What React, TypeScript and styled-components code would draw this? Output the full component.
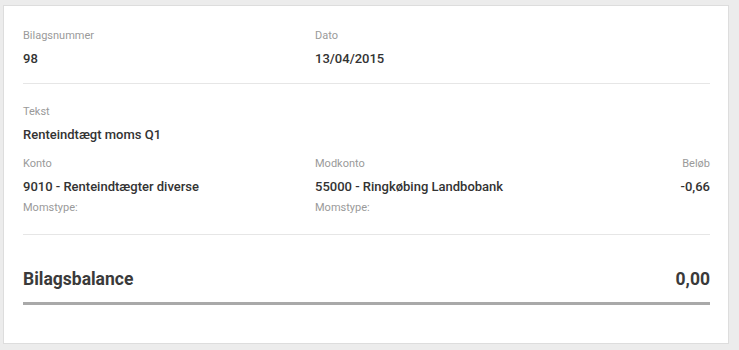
import React from "react";
import styled, { createGlobalStyle } from "styled-components";

const GlobalStyle = createGlobalStyle`
  html, body {
    margin: 0;
    padding: 0;
    background: #ececec;
    font-family: Roboto, "Liberation Sans", Arial, sans-serif;
  }
`;

const Page = styled.div`
  padding: 5px 10px 6px 3px;
`;

const Card = styled.div`
  background: #ffffff;
  border: 1px solid #dddddd;
  padding: 23px 18px 0 19px;
  box-sizing: border-box;
  height: 339px;
`;

const Row = styled.div<{ $gapBelow?: number }>`
  display: grid;
  grid-template-columns: 292px 1fr auto;
  margin-bottom: ${(p) => p.$gapBelow ?? 0}px;
`;

const Field = styled.div<{ $right?: boolean }>`
  display: flex;
  flex-direction: column;
  align-items: ${(p) => (p.$right ? "flex-end" : "flex-start")};
`;

const Label = styled.div`
  font-size: 11px;
  line-height: 14px;
  color: #9a9a9a;
`;

const Value = styled.div`
  margin-top: 7px;
  font-size: 13px;
  line-height: 18px;
  font-weight: 500;
  color: #333333;
`;

const SubLabel = styled(Label)`
  margin-top: 5px;
`;

const Divider = styled.hr<{ $above: number; $below: number }>`
  border: 0;
  border-top: 1px solid #e6e6e6;
  margin: ${(p) => p.$above}px 0 ${(p) => p.$below}px;
`;

const Balance = styled.div`
  display: flex;
  justify-content: space-between;
  align-items: center;
  font-size: 17.5px;
  line-height: 24px;
  font-weight: 700;
  color: #3a3a3a;
  padding-bottom: 11px;
  border-bottom: 3px solid #a9a9a9;
`;

const App: React.FC = () => {
  return (
    <Page>
      <GlobalStyle />
      <Card>
        <Row>
          <Field>
            <Label>Bilagsnummer</Label>
            <Value>98</Value>
          </Field>
          <Field>
            <Label>Dato</Label>
            <Value>13/04/2015</Value>
          </Field>
        </Row>
        <Divider $above={15} $below={21} />
        <Row $gapBelow={13}>
          <Field>
            <Label>Tekst</Label>
            <Value>Renteindtægt moms Q1</Value>
          </Field>
        </Row>
        <Row>
          <Field>
            <Label>Konto</Label>
            <Value>9010 - Renteindtægter diverse</Value>
            <SubLabel>Momstype:</SubLabel>
          </Field>
          <Field>
            <Label>Modkonto</Label>
            <Value>55000 - Ringkøbing Landbobank</Value>
            <SubLabel>Momstype:</SubLabel>
          </Field>
          <Field $right>
            <Label>Beløb</Label>
            <Value>-0,66</Value>
          </Field>
        </Row>
        <Divider $above={19} $below={32} />
        <Balance>
          <span>Bilagsbalance</span>
          <span>0,00</span>
        </Balance>
      </Card>
    </Page>
  );
};

export default App;
